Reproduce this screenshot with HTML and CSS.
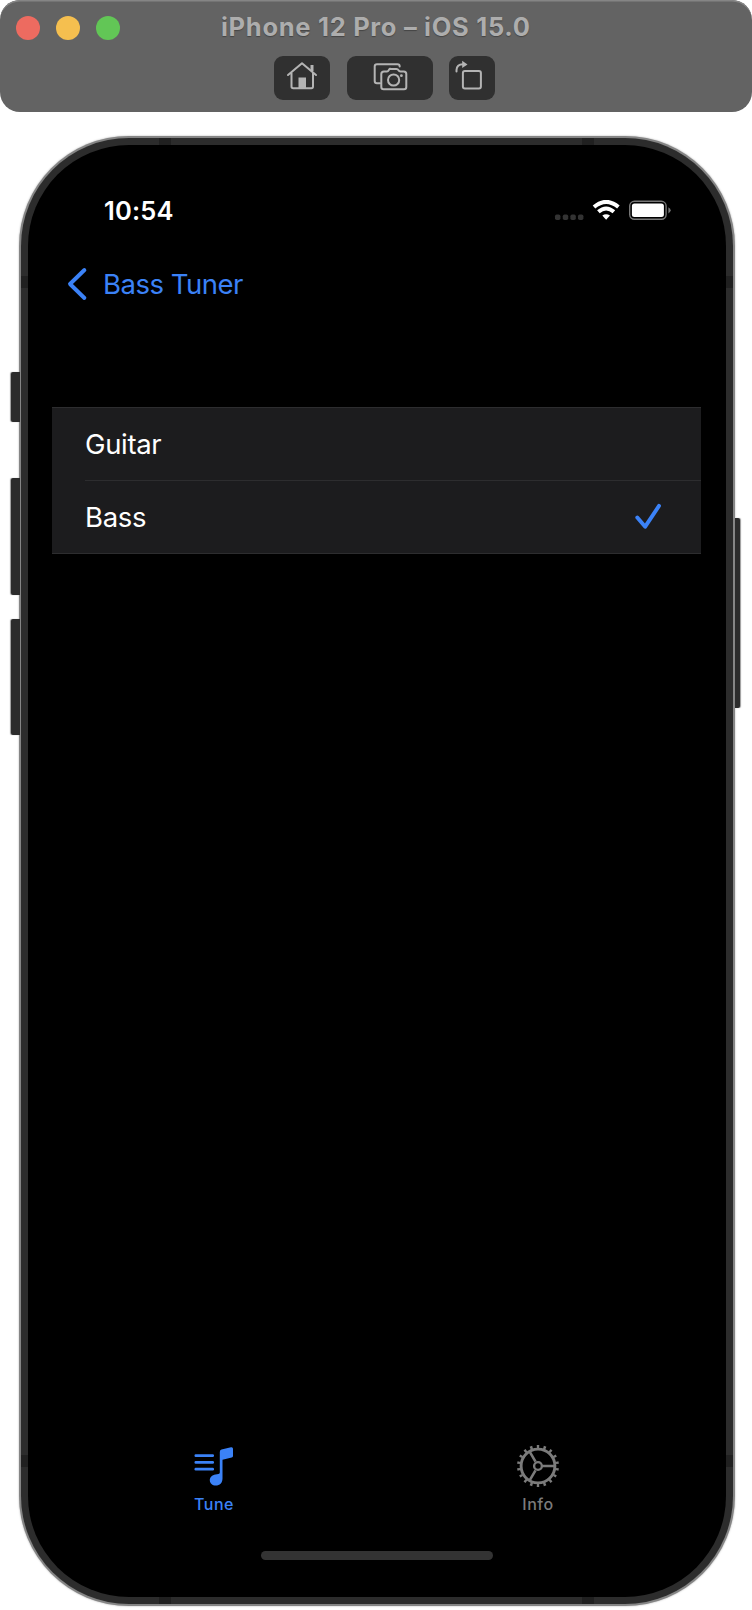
FILE: index.html
```html
<!DOCTYPE html>
<html lang="en">
<head>
<meta charset="utf-8">
<title>iPhone 12 Pro – iOS 15.0</title>
<link rel="stylesheet" href="styles.css">
</head>
<body>
<header class="titlebar">
  <div class="title-row">
    <div class="lights"><i class="light red"></i><i class="light yellow"></i><i class="light green"></i></div>
    <h1 class="title">iPhone 12 Pro – iOS 15.0</h1>
  </div>
  <div class="tools">
    <button class="tool home" aria-label="Home">
      <svg width="56" height="44" viewBox="0 0 56 44" fill="none" stroke="#b4b4b4" stroke-width="2" stroke-linejoin="round" stroke-linecap="round"><path d="M14 19 28 7.2 42 19M17.5 17V30.5Q17.5 32.2 19.2 32.2H37.4Q39 32.2 39 30.5V17"/><path d="M38 15V9" stroke-width="3" stroke-linecap="butt"/><path d="M24.5 21.5h7.5V32h-7.5z" fill="#b4b4b4" stroke="none"/></svg>
    </button>
    <button class="tool camera" aria-label="Screenshot">
      <svg width="86" height="44" viewBox="0 0 86 44" fill="none" stroke="#b4b4b4" stroke-width="2" stroke-linejoin="round" stroke-linecap="round"><path d="M33 27.2H30Q27.7 27.2 27.7 25V10.5Q27.7 8.2 30 8.2H50.5Q52.7 8.2 52.7 10.5"/><path d="M37 15.5H40Q41 15.5 42 13.8T44 13H49.500Q50.800 13 51.500 14.200T53.500 15.500H56.800Q59.300 15.500 59.300 18V31Q59.300 33.200 57 33.200H36.700Q34.300 33.200 34.300 31V18Q34.300 15.500 37 15.500Z"/><circle cx="46.600" cy="24" r="5.600"/><circle cx="54.400" cy="19.700" r="1.400" fill="#b4b4b4" stroke="none"/></svg>
    </button>
    <button class="tool rotate" aria-label="Rotate">
      <svg width="46" height="44" viewBox="0 0 46 44" fill="none" stroke="#b4b4b4" stroke-width="2" stroke-linecap="round"><rect x="13.900" y="14.900" width="18" height="17.600" rx="2"/><path d="M7.500 15.500V14Q7.700 8.500 14 8.300"/><path d="M13.200 4.800 18.500 8.400 13.200 12z" fill="#b4b4b4" stroke="none"/></svg>
    </button>
  </div>
</header>
<main class="stage">
  <div class="device">
    <i class="key mute"></i><i class="key vol-up"></i><i class="key vol-down"></i><i class="key power"></i>
    <div class="frame">
      <i class="band top-l"></i><i class="band top-r"></i><i class="band bot-l"></i><i class="band bot-r"></i>
      <i class="band lft-t"></i><i class="band lft-b"></i><i class="band rgt-t"></i><i class="band rgt-b"></i>
      <div class="screen">
        <div class="status">
          <time class="clock">10:54</time>
          <svg class="indicators" width="118" height="24" viewBox="0 0 118 24"><g fill="#333"><rect x="1" y="14.500" width="5.400" height="5.400" rx="1.700"/><rect x="8.800" y="14.500" width="5.400" height="5.400" rx="1.700"/><rect x="16.400" y="14.500" width="5.400" height="5.400" rx="1.700"/><rect x="24" y="14.500" width="5.400" height="5.400" rx="1.700"/></g>
          <g fill="none" stroke="#fff" stroke-width="4"><path d="M40 7Q52.100 -3.200 64.400 7"/><path d="M44.400 11.800Q52.100 5.300 59.900 11.800"/></g><path d="M48.300 15.600Q52.100 12.700 56 15.600L52.100 19.700Z" fill="#fff"/>
          <rect x="75.700" y="1.300" width="36.400" height="18" rx="4.800" fill="none" stroke="#777" stroke-width="1.400"/><rect x="77.900" y="3.500" width="32" height="13.600" rx="2.500" fill="#fff"/><path d="M114.400 7.200Q119 10.300 114.400 13.400Z" fill="#777"/></svg>
        </div>
        <nav class="nav">
          <svg width="22" height="34" viewBox="0 0 22 34" fill="none" stroke="#3b82f7" stroke-width="3.900" stroke-linecap="round" stroke-linejoin="round"><path d="M18.400 3 4 17 18.400 31"/></svg>
          <span class="back">Bass Tuner</span>
        </nav>
        <ul class="list">
          <li class="row"><span class="guitar">Guitar</span></li>
          <li class="row"><span class="bass">Bass</span>
            <svg class="check" width="28" height="28" viewBox="0 0 28 28" fill="none" stroke="#3b82f7" stroke-width="3.900" stroke-linecap="round" stroke-linejoin="round"><path d="M3.300 14.500 11.200 23.700 25 2.900"/></svg>
          </li>
        </ul>
        <div class="tabs">
          <div class="tab active">
            <svg class="note" width="42" height="44" viewBox="0 0 42 44" fill="#3b82f7"><rect x="2.500" y="10.200" width="19.500" height="2.800" rx="1.200"/><rect x="2.500" y="17" width="19.500" height="2.800" rx="1.200"/><rect x="2.500" y="23.700" width="19.500" height="2.800" rx="1.200"/><path d="M27.800 8Q27.800 6 29.500 5.600L39 3.300Q41 2.900 41 4.800V12Q41 13.300 39.700 13.600L30.500 15.800V34.500C30.500 39 27.700 41.600 23.800 41.600C20.400 41.600 17.800 39.300 17.800 36.300C17.800 33.300 20 31.200 23.500 30.600L26.500 30.100Q27.800 29.900 27.800 28.500Z"/></svg>
            <span class="tune">Tune</span>
          </div>
          <div class="tab">
            <svg width="44" height="44" viewBox="-22 -22 44 44" fill="none" stroke="#7b7b7b"><circle r="16.900" stroke-width="2.900"/><circle r="19.400" stroke-width="3.200" pathLength="180" stroke-dasharray="3.600 6.400" stroke-dashoffset="-3.200"/><circle r="3.900" stroke-width="2.400"/><path d="M5 0H16M-2.500-4.330-8.200-14.200M-2.500 4.330-8.200 14.200" stroke-width="2.600"/></svg>
            <span class="info">Info</span>
          </div>
        </div>
        <i class="home-bar"></i>
      </div>
    </div>
  </div>
</main>
</body>
</html>
```

FILE: styles.css
```css
* { box-sizing: border-box; }
body { margin: 0; width: 752px; height: 1610px; background: #fff; font-family: Inter, "Liberation Sans", sans-serif; overflow: hidden; }
svg { display: block; flex: none; }
.titlebar { height: 112px; border-radius: 20px; background: #636363; box-shadow: inset 0 2px 0 -0.5px #858585; }
.title-row { display: grid; grid-template-columns: 221px 1fr; height: 56px; }
.lights { display: flex; gap: 16px; padding: 16px; }
.light { width: 24px; height: 24px; border-radius: 50%; }
.red { background: #ed6b60; }
.yellow { background: #f5bf4f; }
.green { background: #62c656; }
.title { margin: 0; padding-top: 11px; font-size: 25.5px; line-height: 32px; font-weight: 700; letter-spacing: 0.7px; color: #adadad; white-space: nowrap; text-shadow: 0 1px 1px #444; }
.tools { display: flex; padding-left: 274px; }
.tool { height: 44px; padding: 0; border: 0; border-radius: 9px; background: #303030; }
.home { width: 56px; margin-right: 17px; }
.camera { width: 86px; margin-right: 16px; }
.rotate { width: 46px; }
.stage { padding: 24px 0 0 19px; }
.device { position: relative; width: 716px; height: 1470px; border-radius: 110px; padding: 2px; background: #858585; box-shadow: 0 0 2px #aaa; }
.frame { position: relative; height: 1466px; border-radius: 108px; background: #2c2c2c; padding: 7px; overflow: hidden; }
.screen { position: relative; height: 1452px; border-radius: 101px; background: #000; display: flex; flex-direction: column; padding: 52px 25px 0 24px; }
.key { position: absolute; width: 9px; left: -8px; background: #2c2c2c; border-radius: 2px 0 0 2px; box-shadow: -1px 0 1px #999; }
.mute { top: 236px; height: 50px; }
.vol-up { top: 342px; height: 117px; }
.vol-down { top: 483px; height: 116px; }
.power { left: 716px; top: 382px; width: 5px; height: 190px; border-radius: 0 2px 2px 0; box-shadow: 1px 0 1px #999; }
.band { position: absolute; width: 12px; height: 7px; background: #202020; }
.top-l { left: 138px; top: 0; }
.top-r { left: 561px; top: 0; }
.bot-l { left: 138px; bottom: 0; }
.bot-r { left: 561px; bottom: 0; }
.lft-t, .lft-b, .rgt-t, .rgt-b { width: 7px; height: 12px; }
.lft-t { left: 0; top: 138px; }
.lft-b { left: 0; top: 1317px; }
.rgt-t { right: 0; top: 138px; }
.rgt-b { right: 0; top: 1317px; }
.status { display: flex; justify-content: space-between; height: 70px; padding: 0 29px 0 52px; }
.clock { margin-top: -2px; font-size: 25.500px; line-height: 32px; font-weight: 600; letter-spacing: 0.2px; color: #fff; }
.indicators { margin-top: 3px; }
.nav { display: flex; align-items: center; height: 34px; padding-left: 14px; color: #3b82f7; font-size: 27.500px; letter-spacing: -0.500px; }
.back { margin-left: 15px; }
.list { list-style: none; margin: 106px 0 0; padding: 0; height: 147px; background: #1c1c1e; border-top: 1px solid #2d2d2f; border-bottom: 1px solid #2d2d2f; color: #fff; font-size: 27.500px; letter-spacing: -0.350px; display: grid; grid-template-rows: 72px 73px; }
.row { display: flex; align-items: center; justify-content: space-between; margin-left: 33px; padding-right: 39px; }
.row + .row { border-top: 1px solid #2d2d2f; }
.tabs { display: flex; margin-top: 890px; }
.tab { width: 324px; height: 75px; display: flex; flex-direction: column; align-items: center; color: #7b7b7b; font-size: 16px; line-height: 22px; font-weight: 500; letter-spacing: 0.500px; }
.tab span { margin-top: 5px; }
.note { margin-right: 2px; }
.active { color: #3b82f7; }
.home-bar { width: 232px; height: 9px; border-radius: 5px; background: #333; margin: 32px 0 0 209px; }
```
